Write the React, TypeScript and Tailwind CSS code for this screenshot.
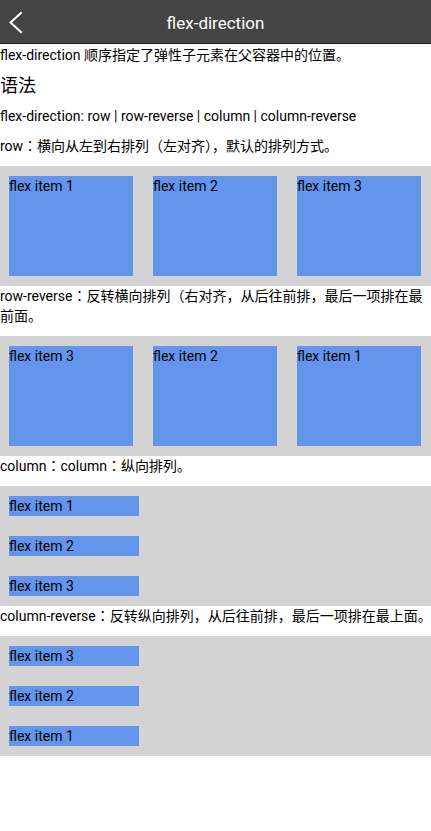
import React from "react";

const Item = ({ label, col }: { label: string; col?: boolean }) => (
  <div
    className={
      col
        ? "w-[130px] h-[20px] bg-[#6495ed] text-[14px] leading-[20px] text-black"
        : "w-[124px] h-[100px] bg-[#6495ed] text-[14px] leading-[20px] text-black"
    }
  >
    {label}
  </div>
);

export default function App() {
  return (
    <div
      className="w-[431px] min-h-[831px] bg-white text-black"
      style={{ fontFamily: 'Roboto, "Noto Sans CJK JP", sans-serif' }}
    >
      <div className="relative h-[44px] bg-[#444444] border-b border-[#1e1e1e] flex items-center justify-center">
        <svg
          className="absolute left-0 top-0"
          width="30"
          height="43"
          viewBox="0 0 30 43"
          fill="none"
        >
          <polyline
            points="21,13 10.5,22.5 21,32"
            stroke="white"
            strokeWidth="2"
            strokeLinecap="square"
            strokeLinejoin="miter"
          />
        </svg>
        <span className="text-white text-[17px] leading-[24px] pt-[2px]">flex-direction</span>
      </div>

      <p className="mt-[1px] text-[14px] leading-[20px]">
        flex-direction 顺序指定了弹性子元素在父容器中的位置。
      </p>
      <h2 className="mt-[9px] text-[18px] leading-[24px] font-normal">语法</h2>
      <p className="mt-[8px] text-[14px] leading-[20px]">
        flex-direction: row | row-reverse | column | column-reverse
      </p>
      <p className="mt-[10px] text-[14px] leading-[20px]">
        row：横向从左到右排列（左对齐），默认的排列方式。
      </p>

      <div className="mt-[10px] h-[120px] bg-[#d3d3d3] flex flex-row gap-[20px] pl-[9px] pt-[10px]">
        <Item label="flex item 1" />
        <Item label="flex item 2" />
        <Item label="flex item 3" />
      </div>

      <p className="text-[14px] leading-[20px]">
        row-reverse：反转横向排列（右对齐，从后往前排，最后一项排在最
        <br />
        前面。
      </p>

      <div className="mt-[10px] h-[120px] bg-[#d3d3d3] flex flex-row gap-[20px] pl-[9px] pt-[10px]">
        <Item label="flex item 3" />
        <Item label="flex item 2" />
        <Item label="flex item 1" />
      </div>

      <p className="text-[14px] leading-[20px]">column：column：纵向排列。</p>

      <div className="mt-[10px] h-[120px] bg-[#d3d3d3] flex flex-col gap-[20px] pl-[9px] pt-[10px]">
        <Item label="flex item 1" col />
        <Item label="flex item 2" col />
        <Item label="flex item 3" col />
      </div>

      <p className="text-[14px] leading-[20px] whitespace-nowrap">
        column-reverse：反转纵向排列，从后往前排，最后一项排在最上面。
      </p>

      <div className="mt-[10px] h-[120px] bg-[#d3d3d3] flex flex-col gap-[20px] pl-[9px] pt-[10px]">
        <Item label="flex item 3" col />
        <Item label="flex item 2" col />
        <Item label="flex item 1" col />
      </div>
    </div>
  );
}
